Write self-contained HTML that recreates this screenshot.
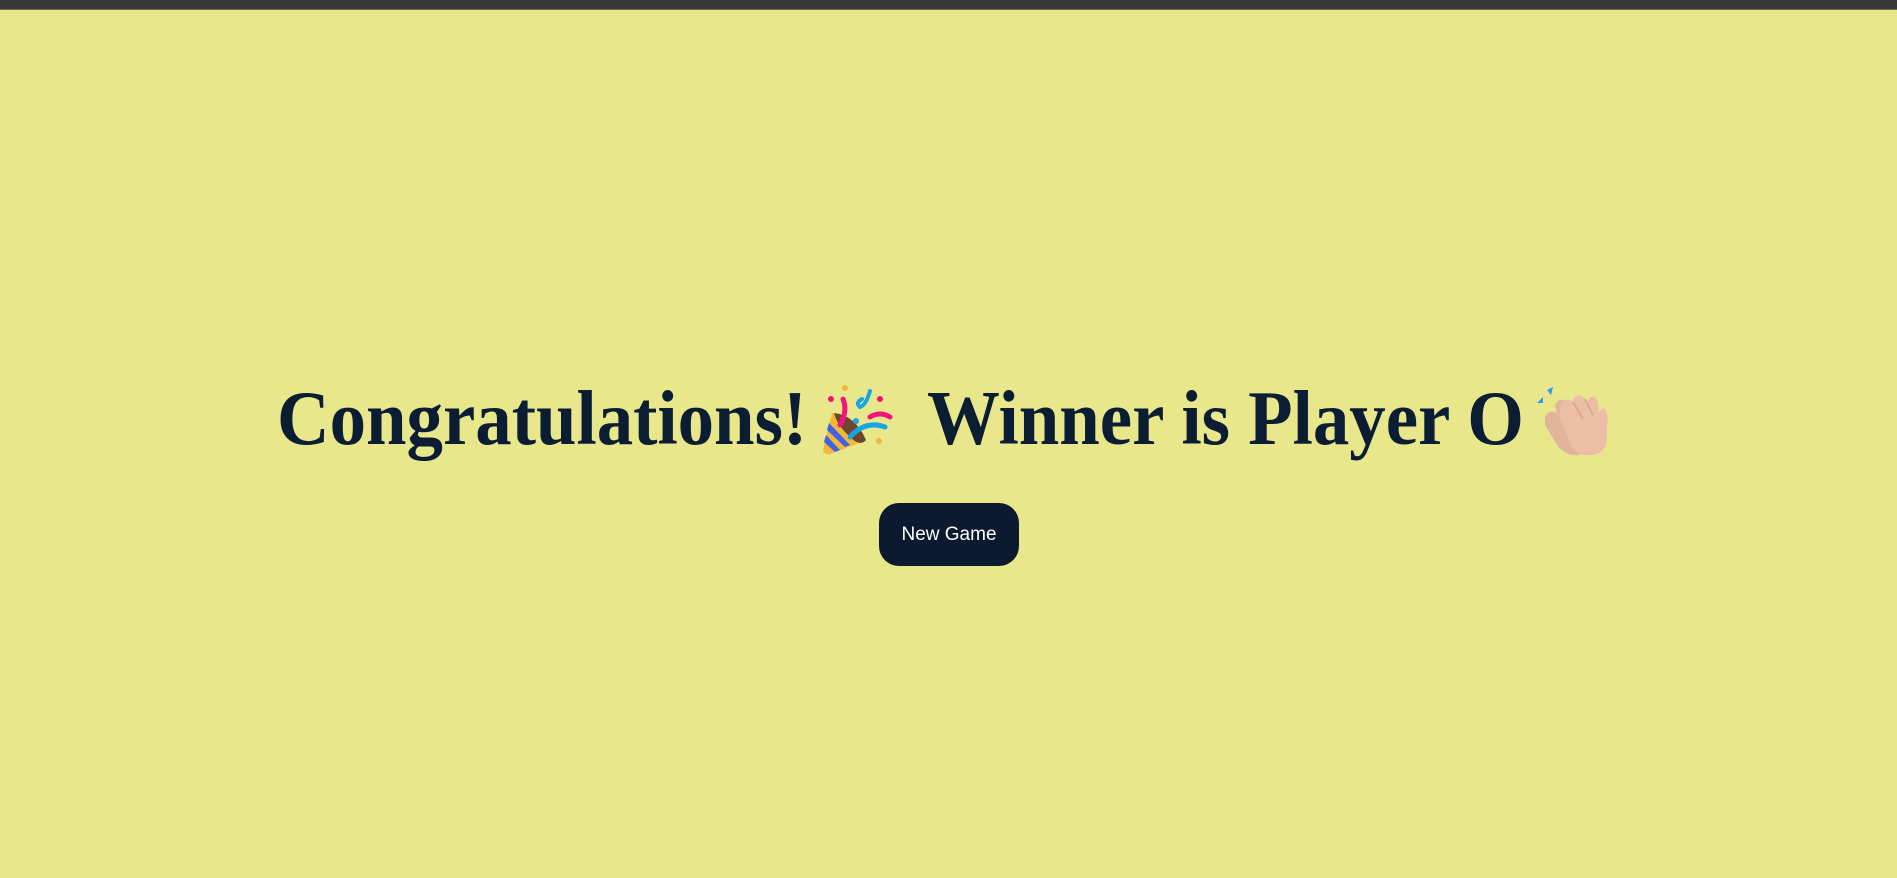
<!DOCTYPE html>
<html><head><meta charset="utf-8"><style>
html,body{margin:0;padding:0;width:1897px;height:878px;overflow:hidden;background:#e8e78c;}
.bar{position:absolute;left:0;top:0;width:1897px;height:9px;background:#383838;border-bottom:1px solid #6a6a50;}
.t{position:absolute;font-family:"Liberation Serif",serif;font-weight:bold;font-size:77px;color:#0b1d33;line-height:1;white-space:nowrap;transform:scaleX(0.946);transform-origin:0 0;}
.btn{position:absolute;left:879px;top:503px;width:140px;height:63px;background:#0b1a2f;border-radius:20px;color:#fff;font-family:"Liberation Sans",sans-serif;font-size:19px;display:flex;align-items:center;justify-content:center;}
svg{position:absolute;}
</style></head><body>
<div class="bar"></div>
<div class="t" style="left:277px;top:380px;">Congratulations!</div>
<div class="t" style="left:927px;top:380px;">Winner is Player O</div>
<svg style="left:810px;top:375px" width="100" height="90" viewBox="0 0 100 90">
<path d="M22 38 L13 75 Q14 80 20 79 L55 66 Q48 45 22 38Z" fill="#f4b73a"/>
<path d="M19 48 L40 70 L35 72 L17 55Z M16 60 L30 75 L25 77 L14 67Z" fill="#4063e6"/>
<path d="M24 38 Q45 40 56 65 Q50 72 40 62 Q27 50 24 38Z" fill="#6b4530"/>
<path d="M33 24 Q38 36 30 50" stroke="#f0147c" stroke-width="5" fill="none" stroke-linecap="round"/>
<path d="M40 62 Q55 45 75 52" stroke="#14a6e6" stroke-width="5" fill="none" stroke-linecap="round"/>
<path d="M60 42 Q70 36 80 42" stroke="#f0147c" stroke-width="5" fill="none" stroke-linecap="round"/>
<path d="M60 16 Q56 30 50 32 Q45 28 52 24" stroke="#14a6e6" stroke-width="4" fill="none" stroke-linecap="round"/>
<circle cx="35" cy="13" r="3" fill="#f4b73a"/><circle cx="21" cy="24" r="3" fill="#f0147c"/>
<circle cx="70" cy="24" r="3" fill="#f0147c"/><circle cx="46" cy="46" r="3" fill="#14a6e6"/>
<circle cx="69" cy="66" r="3" fill="#f4b73a"/>
</svg>
<svg style="left:1525px;top:375px" width="95" height="90" viewBox="0 0 95 90">
<path d="M12 28 L18 22 L18 28Z M22 15 L28 12 L26 20Z" fill="#2f9bf0"/>
<path d="M20 42 Q24 34 32 38 L30 30 Q34 22 42 26 L62 52 Q66 75 54 80 Q42 82 32 70 L20 50Z" fill="#e2b49a"/>
<path d="M36 30 Q40 22 48 26 L48 24 Q52 18 58 22 L62 28 Q64 20 70 22 Q74 26 74 38 Q76 32 80 34 Q84 38 82 50 L82 64 Q80 82 60 80 Q48 78 44 66 L34 42Z" fill="#edbea6"/>
<path d="M48 27 L58 44 M60 24 L68 40" stroke="#dca88e" stroke-width="2" fill="none"/>
</svg>
<div class="btn">New Game</div>
</body></html>
